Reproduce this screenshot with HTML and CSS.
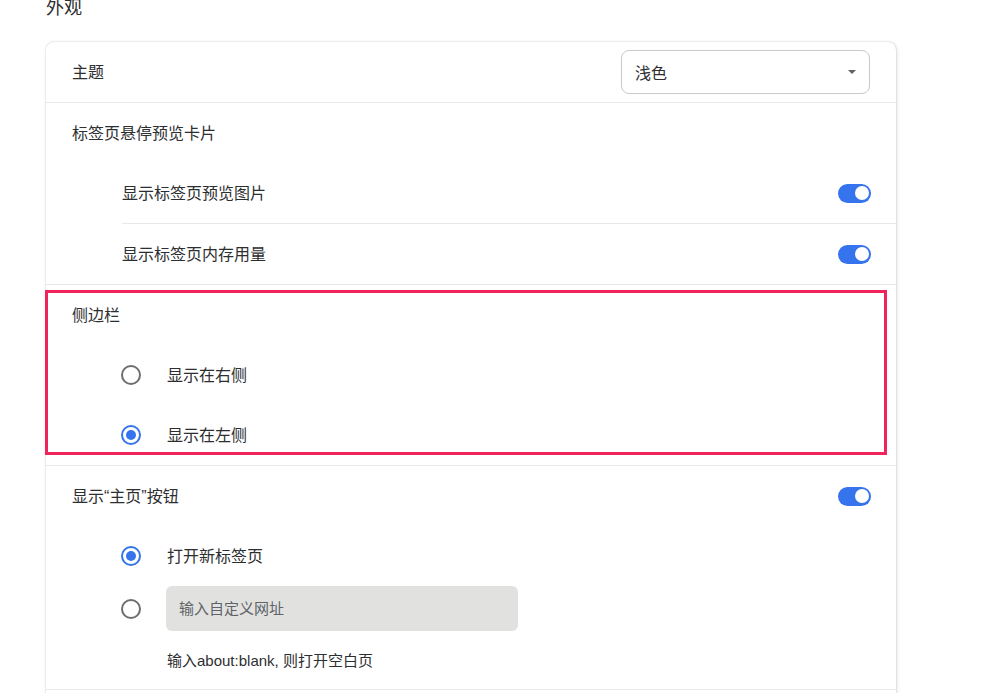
FILE: index.html
```html
<!DOCTYPE html>
<html>

<head>
    <meta charset="UTF-8">
    <title>外观</title>
    <link rel="stylesheet" href="styles.css">
</head>

<body>
    <div id="page">
        <h2 id="sectionTitle">外观</h2>

        <div id="appearanceCard">
            <div class="row">
                <span class="label">主题</span>
                <div class="select">
                    <span>浅色</span>
                    <span class="selectArrow"></span>
                </div>
            </div>

            <div class="row divided">
                <span class="label">标签页悬停预览卡片</span>
            </div>
            <div class="row sub">
                <span class="label">显示标签页预览图片</span>
                <span class="toggle on"></span>
            </div>
            <div class="row sub subDivided">
                <span class="label">显示标签页内存用量</span>
                <span class="toggle on"></span>
            </div>

            <div class="row divided">
                <span class="label">侧边栏</span>
            </div>
            <div class="row radioRow">
                <span class="radio"></span>
                <span class="label">显示在右侧</span>
            </div>
            <div class="row radioRow">
                <span class="radio checked"></span>
                <span class="label">显示在左侧</span>
            </div>

            <div class="row divided">
                <span class="label">显示“主页”按钮</span>
                <span class="toggle on"></span>
            </div>
            <div class="row radioRow">
                <span class="radio checked"></span>
                <span class="label">打开新标签页</span>
            </div>
            <div class="radioRow urlRow">
                <span class="radio"></span>
                <input type="text" class="urlInput" placeholder="输入自定义网址">
            </div>
            <div class="hint">输入about:blank, 则打开空白页</div>

            <div class="row divided"></div>

            <div id="highlight"></div>
        </div>
    </div>
</body>

</html>
```

FILE: styles.css
```css
body {
    margin: 0;
    background-color: #ffffff;
    color: #2d2e30;
    font-family: "Liberation Sans", "Noto Sans CJK SC", sans-serif;
}

#page {
    padding-left: 46px;
    width: 850px;
}

#sectionTitle {
    margin: -4px 0 0 0;
    font-size: 18px;
    line-height: 24px;
    font-weight: normal;
}

#appearanceCard {
    position: relative;
    margin-top: 22px;
    background: #ffffff;
    border-radius: 8px;
    box-shadow: 0 0 2px rgba(0, 0, 0, 0.2), 1px 1px 4px rgba(0, 0, 0, 0.1);
}

.row {
    display: flex;
    align-items: center;
    justify-content: space-between;
    height: 60px;
    padding: 0 25px 0 26px;
}

.divided {
    border-top: 1px solid #e8e8e8;
}

.sub {
    margin-left: 76px;
    padding-left: 0;
}

.subDivided {
    border-top: 1px solid #e8e8e8;
}

.label {
    font-size: 16px;
    line-height: 22px;
    padding-top: 1px;
}

.select {
    display: flex;
    align-items: center;
    justify-content: space-between;
    box-sizing: border-box;
    width: 249px;
    height: 44px;
    margin-right: 1px;
    padding: 0 13px 0 13px;
    border: 1px solid #c9c9c9;
    border-radius: 8px;
    font-size: 16px;
}

.selectArrow {
    width: 0;
    height: 0;
    border-left: 4px solid transparent;
    border-right: 4px solid transparent;
    border-top: 4px solid #5f6368;
}

.toggle {
    position: relative;
    width: 33px;
    height: 19px;
    border-radius: 10px;
    background: #3574ec;
}

.toggle::after {
    content: "";
    position: absolute;
    top: 2.5px;
    right: 2.5px;
    width: 14px;
    height: 14px;
    border-radius: 50%;
    background: #ffffff;
}

.radioRow {
    justify-content: flex-start;
    gap: 26px;
    margin-left: 75px;
    padding-left: 0;
}

.radio {
    box-sizing: border-box;
    width: 20px;
    height: 20px;
    border: 2px solid #6e6e6e;
    border-radius: 50%;
    flex-shrink: 0;
    display: flex;
    align-items: center;
    justify-content: center;
}

.radio.checked {
    border-color: #3574ec;
}

.radio.checked::after {
    content: "";
    width: 10px;
    height: 10px;
    border-radius: 50%;
    background: #3574ec;
}

.urlRow {
    display: flex;
    align-items: center;
    gap: 25px;
}

.urlInput {
    box-sizing: border-box;
    width: 352px;
    height: 45px;
    padding: 0 13px;
    border: none;
    border-radius: 6px;
    background: #e1e2e0;
    font-family: "Liberation Sans", "Noto Sans CJK SC", sans-serif;
    font-size: 15px;
    color: #202124;
    outline: none;
}

.urlInput::placeholder {
    color: #5f6368;
}

.hint {
    margin: 19px 0 0 121px;
    padding-bottom: 17px;
    font-size: 15px;
    line-height: 22px;
    color: #2d2e30;
}

#highlight {
    position: absolute;
    left: -1px;
    top: 248px;
    width: 836px;
    height: 159px;
    border: 3px solid #f0245a;
}
```
